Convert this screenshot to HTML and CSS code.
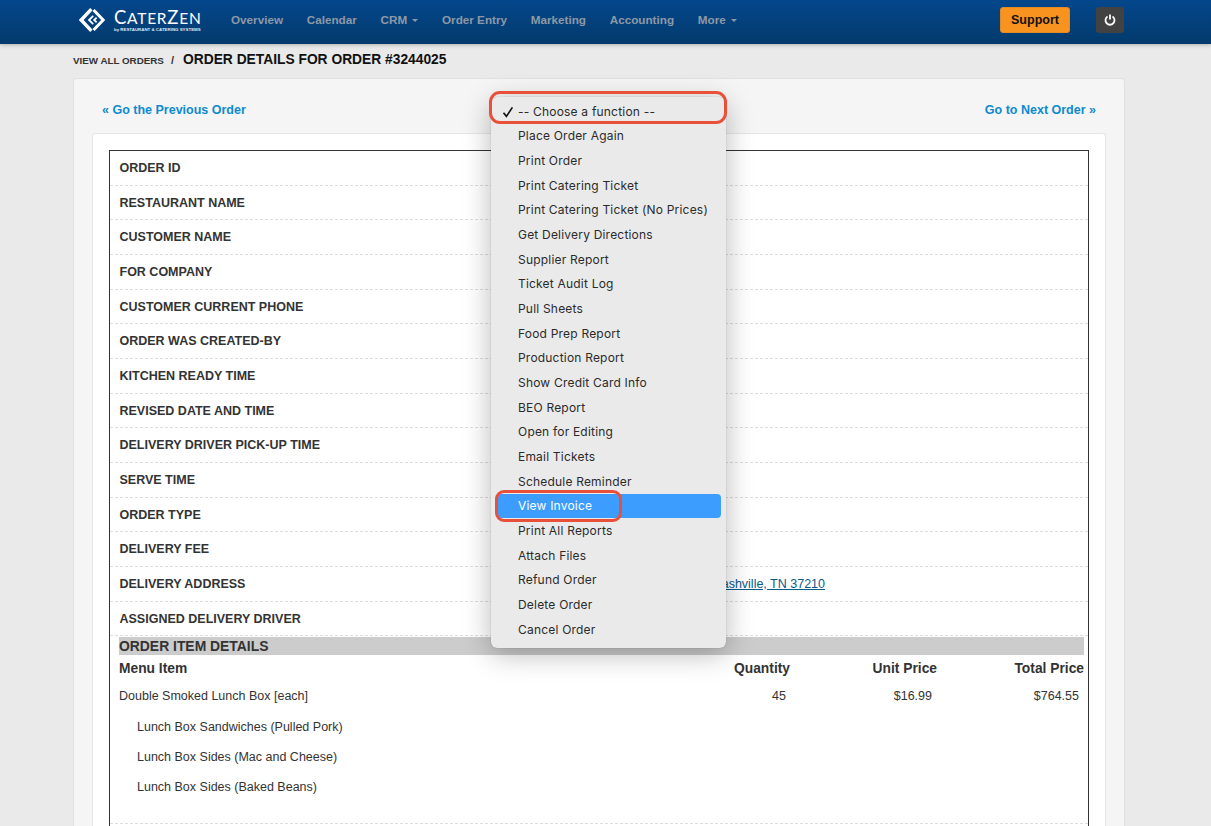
FILE: index.html
```html
<!DOCTYPE html>
<html lang="en">
<head>
<meta charset="utf-8">
<title>Order Details</title>
<link rel="stylesheet" href="styles.css">
</head>
<body>
<header class="topbar">
  <a class="logo">
    <svg class="logo-mark" viewBox="0 0 26 26" width="26" height="26"><path d="M12.4 2.2 L2.2 13 L12.4 23.8" fill="none" stroke="#fff" stroke-width="3.4"/><path d="M14.6 3 L24.2 13 L14.6 23" fill="none" stroke="#fff" stroke-width="3"/><path d="M14.2 8.8 L10 13 L14.2 17.2 M17.6 10.6 L15.2 13 L17.6 15.4" fill="none" stroke="#fff" stroke-width="1.8"/></svg>
    <span class="logo-text"><span class="logo-name">C<small>ATER</small>Z<small>EN</small></span><span class="logo-sub">by RESTAURANT &amp; CATERING SYSTEMS</span></span>
  </a>
  <nav class="nav">
    <a>Overview</a><a>Calendar</a><a class="caret">CRM</a><a>Order Entry</a><a>Marketing</a><a>Accounting</a><a class="caret">More</a>
  </nav>
  <a class="support">Support</a>
  <a class="power"><svg viewBox="0 0 12 12" width="12" height="12"><path d="M3.5 2.5 A4.5 4.5 0 1 0 8.5 2.5" fill="none" stroke="#fff" stroke-width="1.8"/><path d="M6 .5 V5.6" stroke="#fff" stroke-width="1.8"/></svg></a>
</header>

<main class="page">
  <div class="crumbs"><a class="crumb-link">VIEW ALL ORDERS</a><span class="crumb-sep">/</span><h1>ORDER DETAILS FOR ORDER #3244025</h1></div>
  <section class="panel">
    <div class="pager"><a>« Go the Previous Order</a><a>Go to Next Order »</a></div>
    <div class="card">
      <div class="sheet">
        <div class="row">ORDER ID</div>
        <div class="row">RESTAURANT NAME</div>
        <div class="row">CUSTOMER NAME</div>
        <div class="row">FOR COMPANY</div>
        <div class="row">CUSTOMER CURRENT PHONE</div>
        <div class="row">ORDER WAS CREATED-BY</div>
        <div class="row">KITCHEN READY TIME</div>
        <div class="row">REVISED DATE AND TIME</div>
        <div class="row">DELIVERY DRIVER PICK-UP TIME</div>
        <div class="row">SERVE TIME</div>
        <div class="row">ORDER TYPE</div>
        <div class="row">DELIVERY FEE</div>
        <div class="row">DELIVERY ADDRESS<a class="address">Nashville, TN 37210</a></div>
        <div class="row">ASSIGNED DELIVERY DRIVER</div>
        <div class="items">
          <h2>ORDER ITEM DETAILS</h2>
          <div class="item-head"><span>Menu Item</span><span>Quantity</span><span>Unit Price</span><span>Total Price</span></div>
          <div class="item-row"><span>Double Smoked Lunch Box [each]</span><span>45</span><span>$16.99</span><span>$764.55</span></div>
          <div class="sub">Lunch Box Sandwiches (Pulled Pork)</div>
          <div class="sub">Lunch Box Sides (Mac and Cheese)</div>
          <div class="sub">Lunch Box Sides (Baked Beans)</div>
        </div>
      </div>
    </div>
  </section>
</main>

<ul class="menu">
  <li class="checked"><svg class="check" viewBox="0 0 12 12" width="12" height="12"><path d="M1.5 6.8 L4.4 10.4 L10.4 1.4" fill="none" stroke="#111" stroke-width="1.7"/></svg>-- Choose a function --</li>
  <li>Place Order Again</li>
  <li>Print Order</li>
  <li>Print Catering Ticket</li>
  <li>Print Catering Ticket (No Prices)</li>
  <li>Get Delivery Directions</li>
  <li>Supplier Report</li>
  <li>Ticket Audit Log</li>
  <li>Pull Sheets</li>
  <li>Food Prep Report</li>
  <li>Production Report</li>
  <li>Show Credit Card Info</li>
  <li>BEO Report</li>
  <li>Open for Editing</li>
  <li>Email Tickets</li>
  <li>Schedule Reminder</li>
  <li class="active">View Invoice</li>
  <li>Print All Reports</li>
  <li>Attach Files</li>
  <li>Refund Order</li>
  <li>Delete Order</li>
  <li>Cancel Order</li>
</ul>
<div class="mark mark-top"></div>
<div class="mark mark-invoice"></div>
</body>
</html>
```
FILE: styles.css
```css
* { box-sizing: border-box; }
html, body { margin: 0; height: 826px; overflow: hidden; }
body { background: #eaeaea; font-family: "Liberation Sans", Arial, sans-serif; color: #333; position: relative; display: flex; flex-direction: column; }
a { cursor: pointer; }

.topbar { flex: none; height: 44px; padding: 0 87px 4px 79px; display: flex; align-items: center; background: linear-gradient(#04478c, #033a6c); box-shadow: 0 1px 4px rgba(0,0,0,.25); }
.logo { display: flex; align-items: center; gap: 9px; width: 152px; color: #fff; }
.logo-mark { flex: none; }
.logo-text { display: flex; flex-direction: column; }
.logo-name { font-family: Lato, sans-serif; font-size: 18.5px; line-height: 18px; letter-spacing: .75px; white-space: nowrap; }
.logo-name small { font-size: 15.5px; }
.logo-sub { font-size: 4.4px; line-height: 5px; font-weight: 700; white-space: nowrap; color: #dfe8f2; }
.nav { display: flex; gap: 23.8px; flex: 1; padding-bottom: 1px; font-size: 11.7px; font-weight: 700; color: #8d99a6; }
.nav a { white-space: nowrap; }
.caret::after { content: ""; display: inline-block; margin-left: 5px; vertical-align: 2px; border: 3px solid transparent; border-top-color: #8d99a6; border-bottom: 0; }
.support { width: 70px; height: 26px; margin-right: 26px; background: #f7931e; border: 1px solid #e28a24; border-radius: 3px; color: #111; font-size: 12.5px; font-weight: 700; display: flex; align-items: center; justify-content: center; }
.power { width: 28px; height: 26px; background: #424242; border-radius: 3px; display: flex; align-items: center; justify-content: center; }

.page { flex: 1; min-height: 0; padding: 0 86px 0 73px; display: flex; flex-direction: column; }
.crumbs { flex: none; height: 34px; display: flex; align-items: center; padding-bottom: 4px; color: #333; }
.crumb-link { font-size: 9.8px; font-weight: 700; padding-top: 2px; }
.crumb-sep { font-size: 11px; font-weight: 700; margin: 2px 9px 0 7px; }
h1 { margin: 0; font-size: 13.8px; font-weight: 700; color: #111; }

.panel { flex: 1; min-height: 0; padding: 0 18px; background: #f5f5f5; border: 1px solid #e0e0e0; border-bottom: 0; border-radius: 4px 4px 0 0; display: flex; flex-direction: column; }
.pager { flex: none; height: 54px; padding: 7px 10px 0; display: flex; align-items: center; justify-content: space-between; font-size: 12.5px; font-weight: 700; color: #0d8bd0; }
.card { flex: 1; min-height: 0; padding: 16px 16px 0; background: #fff; border: 1px solid #e6e6e6; border-bottom: 0; border-radius: 3px 3px 0 0; display: flex; flex-direction: column; }
.sheet { flex: 1; min-height: 0; border: 1px solid #333; border-bottom: 0; }
.row { height: 34.68px; padding: 0 263px 0 9.5px; display: flex; align-items: center; font-size: 12.5px; font-weight: 700; color: #333; border-bottom: 1px dashed #ddd; }
.address { margin-left: auto; font-weight: 400; font-size: 12.5px; color: #0a5a8c; text-decoration: underline; }
.items { padding: 1px 4px 20px 9px; font-size: 12.5px; border-bottom: 1px dashed #ddd; }
h2 { margin: 0; height: 18px; background: #ccc; font-size: 13.9px; line-height: 18px; font-weight: 700; color: #333; }
.item-head, .item-row { display: grid; grid-template-columns: 1fr 92px 147px 147px; text-align: right; }
.item-head { height: 27px; align-items: center; font-size: 13.8px; font-weight: 700; }
.item-head span:first-child, .item-row span:first-child { text-align: left; }
.item-row { height: 27px; margin-bottom: 2px; align-items: center; padding-right: 5px; }
.item-row span:nth-child(2) { margin-right: -1px; }
.sub { height: 30.4px; display: flex; align-items: center; padding-left: 18px; }

.menu { position: absolute; left: 491px; top: 97px; width: 235px; height: 551px; margin: 0; padding: 2px 5px; list-style: none; background: #eaeaea; border-radius: 6px; box-shadow: 0 6px 28px rgba(0,0,0,.28), 0 0 1px rgba(0,0,0,.4); font-family: Inter, sans-serif; font-size: 12px; letter-spacing: .2px; color: #2b2b2b; }
.menu li { height: 24.67px; padding-left: 22px; display: flex; align-items: center; border-radius: 4px; white-space: nowrap; position: relative; }
.check { position: absolute; left: 6px; top: 7px; }
.menu .active { background: #3d9dff; color: #fff; }
.mark { position: absolute; border: 3px solid #e8503a; }
.mark-top { left: 489px; top: 91px; width: 238px; height: 33px; border-radius: 11px; }
.mark-invoice { left: 495px; top: 490px; width: 127px; height: 32px; border-radius: 9px; }
```
